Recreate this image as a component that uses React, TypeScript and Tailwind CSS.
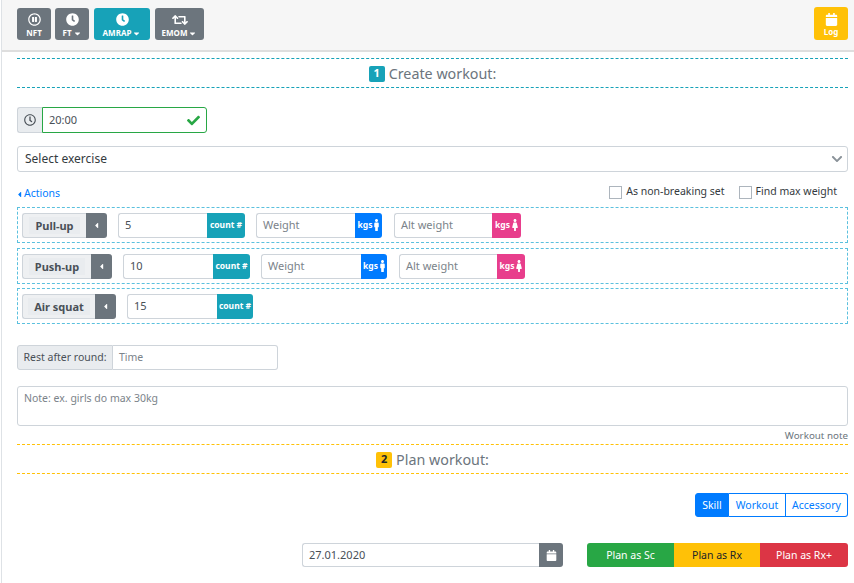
import React from "react";
import { FaCalendar, FaCaretDown, FaCaretLeft, FaCheck, FaChevronDown, FaClock, FaFemale, FaMale, FaRegClock, FaRegPauseCircle, FaRetweet } from "react-icons/fa";

const font = "font-['Noto_Sans','Open_Sans',sans-serif]";

function TopBtn({ icon, label, caret, w, color = "bg-[#6c757d]" }: { icon: React.ReactNode; label: string; caret?: boolean; w: string; color?: string }) {
  return (
    <div className={`${w} ${color} h-[32px] rounded-[3px] flex flex-col items-center pt-[5px] text-white`}>
      <div className="h-[13px] flex items-center text-[13px]">{icon}</div>
      <div className="flex items-center text-[8px] font-bold leading-[12px] mt-[1px]">
        {label}
        {caret && <FaCaretDown className="text-[9px] ml-[1px]" />}
      </div>
    </div>
  );
}

function Heading({ n, text, border, badge }: { n: string; text: string; border: string; badge: string }) {
  return (
    <div className={`ml-[15px] mr-[6px] h-[30px] border-y border-dashed ${border} flex items-center justify-center`}>
      <span className={`${badge} w-[16px] h-[16px] rounded-[2px] flex items-center justify-center text-[11px] font-bold mr-[4px] mt-[1px]`}>{n}</span>
      <span className="text-[14.3px] text-[#6c757d] pt-[1px]">{text}</span>
    </div>
  );
}

function Field({ value, placeholder, w, unit, unitW, color, icon }: { value?: string; placeholder?: string; w: string; unit: string; unitW: string; color: string; icon?: React.ReactNode }) {
  return (
    <div className="flex h-[25px]">
      <div className={`${w} border border-[#ced4da] border-r-0 rounded-l-[3px] flex items-center pl-[6px] text-[11px] ${value ? "text-[#495057]" : "text-[#7b838a]"}`}>
        {value ?? placeholder}
      </div>
      <div className={`${unitW} ${color} rounded-r-[3px] flex items-center justify-center text-white text-[8.5px] font-bold`}>
        {unit}
        {icon}
      </div>
    </div>
  );
}

function Tag({ name, w }: { name: string; w: string }) {
  return (
    <div className="flex h-[25px]">
      <div className={`${w} bg-[#eef0f2] border border-[#ced4da] border-r-0 rounded-l-[3px] flex items-center justify-center text-[11px] font-bold text-[#495057]`}>
        <span className="bg-[#e9ecef] px-[6px] h-[17px] leading-[17px]">{name}</span>
      </div>
      <div className="w-[21px] bg-[#6c757d] rounded-r-[3px] flex items-center justify-center text-white text-[9px]">
        <FaCaretLeft />
      </div>
    </div>
  );
}

function Row({ children, mt }: { children: React.ReactNode; mt: string }) {
  return <div className={`h-[36px] ${mt} ml-[15px] mr-[6px] border border-dashed border-[#5bc0de] flex items-center pl-[4px]`}>{children}</div>;
}

const Male = <FaMale className="w-[5px] h-[12px] ml-[2px]" />;
const Female = <FaFemale className="w-[6px] h-[12px] ml-[2px]" />;

export default function App() {
  return (
    <div className={`${font} w-[853px] h-[583px] overflow-hidden bg-white border-l border-[#dee2e6] ml-[1px] text-[#212529]`}>
      <div className="h-[52px] bg-[#f6f6f6] border-b-2 border-[#dedede] pl-[15px] pr-[6px] flex items-center justify-between">
        <div className="flex items-center gap-[4px] -mt-[2px]">
          <TopBtn w="w-[34px]" icon={<FaRegPauseCircle />} label="NFT" />
          <TopBtn w="w-[34px]" icon={<FaClock />} label="FT" caret />
          <div className="ml-[1px]"><TopBtn w="w-[56px]" color="bg-[#17a2b8]" icon={<FaClock />} label="AMRAP" caret /></div>
          <div className="ml-[1px]"><TopBtn w="w-[49px]" icon={<FaRetweet className="text-[16px]" />} label="EMOM" caret /></div>
        </div>
        <div className="w-[34px] h-[33px] rounded-[3px] bg-[#ffc107] flex flex-col items-center pt-[6px] text-white -mt-[3px]">
          <FaCalendar className="text-[13px]" />
          <span className="text-[8px] font-bold leading-[12px]">Log</span>
        </div>
      </div>

      <div className="mt-[6px]">
        <Heading n="1" text="Create workout:" border="border-[#17a2b8]" badge="bg-[#17a2b8] text-white" />
      </div>

      <div className="ml-[15px] mt-[19px] flex h-[26px] w-[190px]">
        <div className="w-[25px] bg-[#e9ecef] border border-[#ced4da] border-r-0 rounded-l-[3px] flex items-center justify-center text-[#495057] text-[12px]">
          <FaRegClock />
        </div>
        <div className="flex-1 border border-[#28a745] rounded-r-[3px] flex items-center justify-between pl-[6px] pr-[6px] text-[11px] text-[#495057]">
          20:00
          <FaCheck className="text-[#28a745] text-[13px]" />
        </div>
      </div>

      <div className="ml-[15px] mr-[6px] mt-[13px] h-[26px] border border-[#ced4da] rounded-[3px] flex items-center justify-between pl-[7px] pr-[4px] text-[12px] text-[#343a40]">
        Select exercise
        <FaChevronDown className="text-[#8a9299] text-[12px]" />
      </div>

      <div className="ml-[15px] mr-[6px] mt-[10px] h-[22px] flex items-center justify-between">
        <div className="flex items-center text-[10.5px] text-[#007bff] pt-[2px]">
          <FaCaretLeft className="text-[9px] -ml-[2px]" />
          Actions
        </div>
        <div className="flex items-center text-[10.5px] text-[#343a40] pr-[11px] -mt-[2px]">
          <span className="w-[13px] h-[13px] border border-[#adb5bd] mr-[4px]" />
          As non-breaking set
          <span className="w-[13px] h-[13px] border border-[#adb5bd] ml-[14px] mr-[4px]" />
          Find max weight
        </div>
      </div>

      <Row mt="mt-[3px]">
        <Tag name="Pull-up" w="w-[64px]" />
        <div className="ml-[11px]"><Field value="5" w="w-[89px]" unit="count #" unitW="w-[38px]" color="bg-[#17a2b8]" /></div>
        <div className="ml-[11px]"><Field placeholder="Weight" w="w-[99px]" unit="kgs" unitW="w-[27px]" color="bg-[#007bff]" icon={Male} /></div>
        <div className="ml-[12px]"><Field placeholder="Alt weight" w="w-[98px]" unit="kgs" unitW="w-[29px]" color="bg-[#e83e8c]" icon={Female} /></div>
      </Row>
      <Row mt="mt-[5px]">
        <Tag name="Push-up" w="w-[69px]" />
        <div className="ml-[11px]"><Field value="10" w="w-[90px]" unit="count #" unitW="w-[37px]" color="bg-[#17a2b8]" /></div>
        <div className="ml-[11px]"><Field placeholder="Weight" w="w-[100px]" unit="kgs" unitW="w-[26px]" color="bg-[#007bff]" icon={Male} /></div>
        <div className="ml-[12px]"><Field placeholder="Alt weight" w="w-[98px]" unit="kgs" unitW="w-[28px]" color="bg-[#e83e8c]" icon={Female} /></div>
      </Row>
      <Row mt="mt-[4px]">
        <Tag name="Air squat" w="w-[73px]" />
        <div className="ml-[11px]"><Field value="15" w="w-[90px]" unit="count #" unitW="w-[36px]" color="bg-[#17a2b8]" /></div>
      </Row>

      <div className="ml-[15px] mt-[21px] flex h-[25px] w-[261px] text-[10.5px]">
        <div className="w-[96px] bg-[#e9ecef] border border-[#ced4da] rounded-l-[3px] flex items-center justify-center text-[#495057]">Rest after round:</div>
        <div className="flex-1 border border-l-0 border-[#ced4da] rounded-r-[3px] flex items-center pl-[6px] pt-[1px] text-[#7b838a]">Time</div>
      </div>

      <div className="ml-[15px] mr-[6px] mt-[16px] h-[40px] border border-[#ced4da] rounded-[3px] px-[6px] py-[3px] text-[10.5px] leading-[16px] text-[#7b838a]">
        Note: ex. girls do max 30kg
      </div>
      <div className="ml-[15px] mr-[6px] mt-[3px] h-[15px] text-right text-[9.8px] leading-[14px] text-[#6c757d]">Workout note</div>

      <Heading n="2" text="Plan workout:" border="border-[#ffc107]" badge="bg-[#ffc107] text-[#212529]" />

      <div className="ml-[15px] mr-[6px] mt-[19px] flex justify-end">
        <div className="flex h-[24px] text-[10.5px] text-[#007bff]">
          <div className="w-[34px] bg-[#007bff] text-white border border-[#007bff] rounded-l-[3px] flex items-center justify-center pt-[1px]">Skill</div>
          <div className="w-[57px] border border-l-0 border-[#007bff] flex items-center justify-center pt-[1px]">Workout</div>
          <div className="w-[62px] border border-l-0 border-[#007bff] rounded-r-[3px] flex items-center justify-center pt-[1px]">Accessory</div>
        </div>
      </div>

      <div className="ml-[15px] mr-[6px] mt-[26px] flex justify-end h-[24px]">
        <div className="flex w-[261px]">
          <div className="flex-1 border border-[#ced4da] border-r-0 rounded-l-[3px] flex items-center pl-[6px] text-[11px] text-[#495057]">27.01.2020</div>
          <div className="w-[24px] bg-[#6c757d] rounded-r-[3px] flex items-center justify-center text-white text-[11px]">
            <FaCalendar />
          </div>
        </div>
        <div className="flex w-[261px] ml-[24px] text-[10.5px]">
          <div className="w-[87px] bg-[#28a745] text-white rounded-l-[3px] flex items-center justify-center pt-[1px]">Plan as Sc</div>
          <div className="w-[86px] bg-[#ffc107] text-[#212529] flex items-center justify-center pt-[1px]">Plan as Rx</div>
          <div className="w-[88px] bg-[#dc3545] text-white rounded-r-[3px] flex items-center justify-center pt-[1px]">Plan as Rx+</div>
        </div>
      </div>
    </div>
  );
}
